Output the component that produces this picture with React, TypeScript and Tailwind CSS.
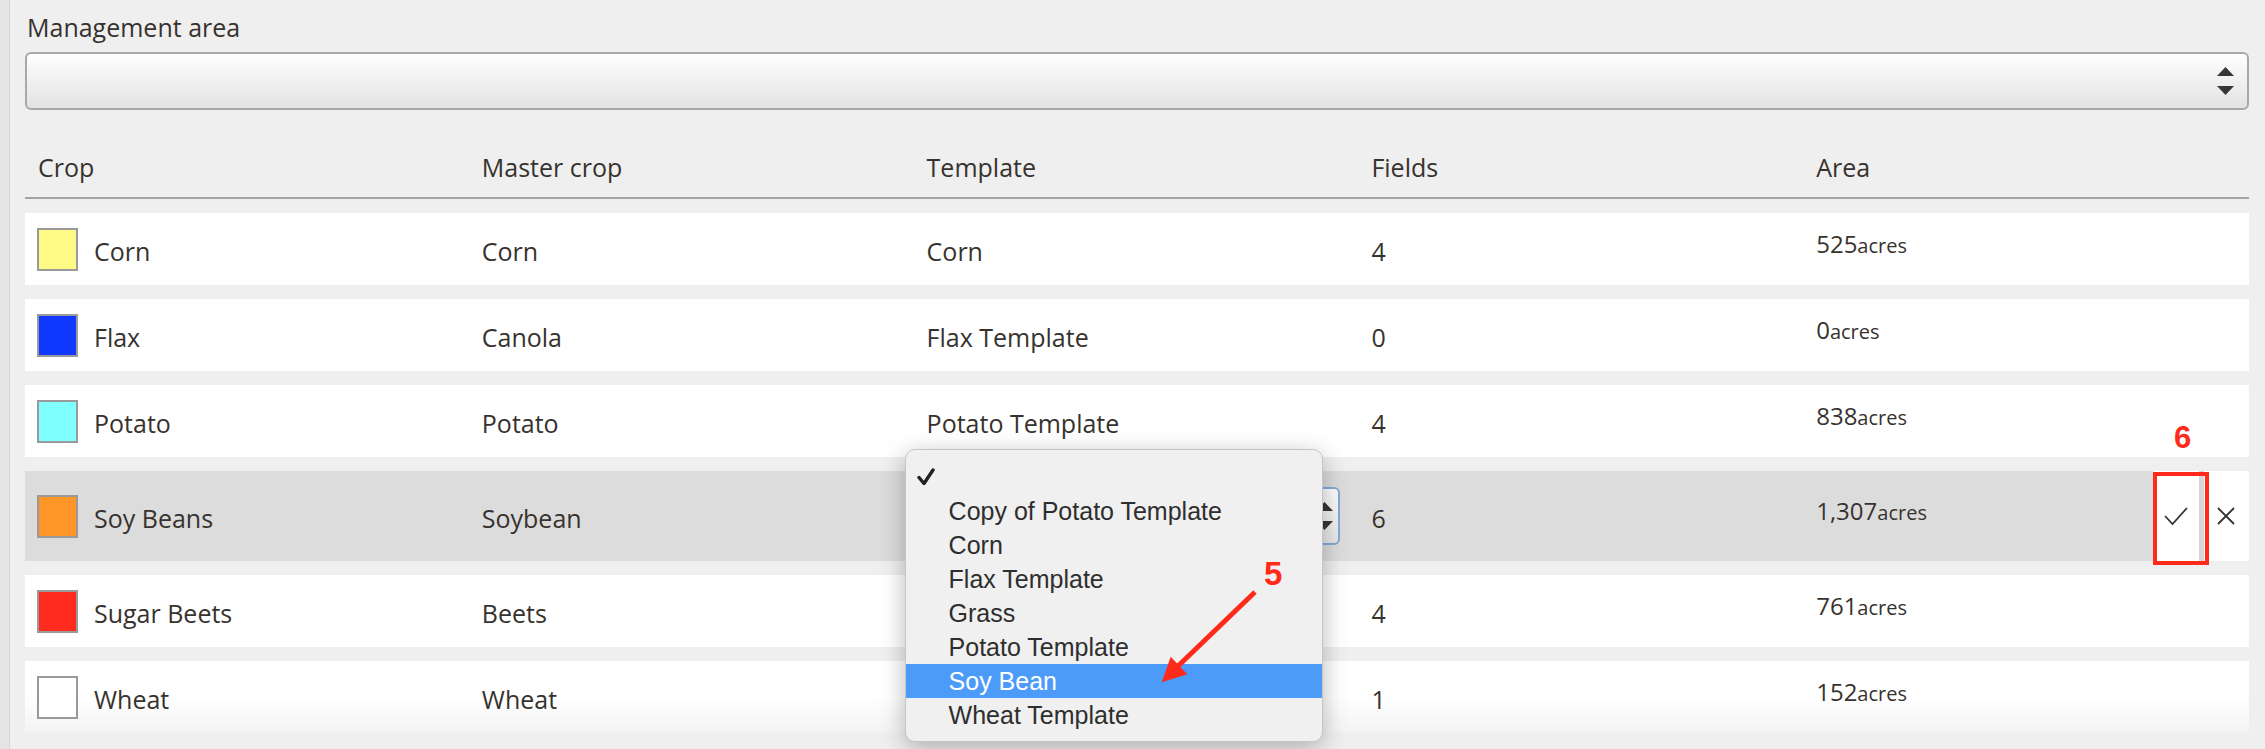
import React from "react";

type Crop = {
  name: string;
  swatch: string;
  master: string;
  template: string;
  fields: string;
  area: string;
};

const crops: Crop[] = [
  { name: "Corn", swatch: "bg-[#fff985]", master: "Corn", template: "Corn", fields: "4", area: "525" },
  { name: "Flax", swatch: "bg-[#1038ff]", master: "Canola", template: "Flax Template", fields: "0", area: "0" },
  { name: "Potato", swatch: "bg-[#80ffff]", master: "Potato", template: "Potato Template", fields: "4", area: "838" },
  { name: "Soy Beans", swatch: "bg-[#ff9526]", master: "Soybean", template: "", fields: "6", area: "1,307" },
  { name: "Sugar Beets", swatch: "bg-[#ff2b1f]", master: "Beets", template: "", fields: "4", area: "761" },
  { name: "Wheat", swatch: "bg-white", master: "Wheat", template: "", fields: "1", area: "152" },
];

const templates = [
  "Copy of Potato Template",
  "Corn",
  "Flax Template",
  "Grass",
  "Potato Template",
  "Soy Bean",
  "Wheat Template",
];

function UpDown({ className }: { className?: string }) {
  return (
    <svg width="17" height="28" viewBox="0 0 17 28" className={className}>
      <path d="M8.5 0 L17 9 L0 9 Z" fill="#3a3632" />
      <path d="M0 19 L17 19 L8.5 28 Z" fill="#3a3632" />
    </svg>
  );
}

function Area({ value }: { value: string }) {
  return (
    <div className="flex items-baseline pb-[8px]">
      <span className="text-[24px]">{value}</span>
      <span className="text-[20px]">acres</span>
    </div>
  );
}

function TemplateMenu() {
  return (
    <div className="absolute -left-[10px] -top-[22px] z-10 w-[418px] rounded-[10px] border border-[#c6c6c6] bg-[#f0f0f0] pt-[10px] pb-[9px] shadow-[0_6px_24px_rgba(0,0,0,0.28)] font-['Liberation_Sans',Arial,sans-serif] text-[25px] text-[#2e2e2e]">
      <div className="flex h-[34px] items-center pl-[11px]">
        <svg width="18" height="18" viewBox="0 0 18 18">
          <path d="M2 9.5 L7 15.5 L16 2" fill="none" stroke="#222" strokeWidth="3.4" strokeLinecap="round" strokeLinejoin="round" />
        </svg>
      </div>
      {templates.map((t) => (
        <div
          key={t}
          className={
            t === "Soy Bean"
              ? "h-[34px] leading-[34px] pl-[43px] bg-[#4c9bf8] text-white"
              : "h-[34px] leading-[34px] pl-[43px]"
          }
        >
          {t}
        </div>
      ))}
    </div>
  );
}

export default function App() {
  return (
    <div className="relative flex h-[749px] w-full overflow-hidden bg-[#efefef] font-['Open_Sans',sans-serif] text-[#37322e]">
      {/* left edge */}
      <div className="w-[10px] shrink-0 border-r border-[#d6d6d6] bg-[#e4e4e4]" />

      <div className="flex-1 pl-[15px] pr-[16px]">
        {/* Management area */}
        <div className="pt-[9px] pl-[2px] text-[25px] leading-[36px]">Management area</div>
        <div className="mt-[7px] flex h-[58px] items-center justify-end rounded-[6px] border-2 border-[#a8a8a8] bg-linear-to-b from-[#fefefe] to-[#e3e3e3] pr-[13px]">
          <UpDown />
        </div>

        {/* Header */}
        <div className="mt-[39px] grid grid-cols-5 border-b-2 border-[#a3a3a3] pb-[12px] text-[25px] leading-[36px]">
          <div className="pl-[13px]">Crop</div>
          <div className="pl-[12px]">Master crop</div>
          <div className="pl-[12px]">Template</div>
          <div className="pl-[12px]">Fields</div>
          <div className="pl-[12px]">Area</div>
        </div>

        {/* Rows */}
        <div className="mt-[14px] flex flex-col gap-[14px] text-[25px] leading-[36px]">
          {crops.map((c) => {
            const editing = c.name === "Soy Beans";
            const last = c.name === "Wheat";
            return (
              <div
                key={c.name}
                className={
                  editing
                    ? "grid h-[90px] grid-cols-5 bg-[#dcdcdc]"
                    : last
                    ? "grid h-[72px] grid-cols-5 bg-linear-to-b from-white from-50% to-[#f3f3f3]"
                    : "grid h-[72px] grid-cols-5 bg-white"
                }
              >
                <div className="flex items-center gap-[16px] pl-[12px]">
                  <div className={`h-[43px] w-[41px] border-2 border-[#9a9a9a] ${c.swatch}`} />
                  <span className="pt-[3px]">{c.name}</span>
                </div>
                <div className="flex items-center pl-[12px] pt-[3px]">{c.master}</div>
                <div className="relative flex items-center pl-[12px]">
                  {editing ? (
                    <>
                      <div className="-ml-[12px] flex h-[58px] w-[425px] items-center justify-end rounded-[6px] border-2 border-[#86a9d6] bg-linear-to-b from-[#fefefe] to-[#e6e6e6] pr-[5px]">
                        <UpDown />
                      </div>
                      <TemplateMenu />
                    </>
                  ) : (
                    <span className="pt-[3px]">{c.template}</span>
                  )}
                </div>
                <div className="flex items-center pl-[12px] pt-[3px]">{c.fields}</div>
                <div className="flex items-stretch justify-between pl-[12px]">
                  <div className="flex items-center">
                    <Area value={c.area} />
                  </div>
                  {editing && (
                    <div className="relative flex w-[96px] bg-white">
                      <div className="flex w-[51px] items-center justify-center border-r-[5px] border-[#d6d6d6]">
                        <svg width="24" height="18" viewBox="0 0 24 18">
                          <path d="M1 9 L8.5 17 L23 1" fill="none" stroke="#333" strokeWidth="1.8" />
                        </svg>
                      </div>
                      <div className="flex flex-1 items-center justify-center">
                        <svg width="18" height="18" viewBox="0 0 18 18">
                          <path d="M1 1 L17 17 M17 1 L1 17" fill="none" stroke="#333" strokeWidth="1.8" />
                        </svg>
                      </div>
                      {/* annotation 6 */}
                      <div className="absolute left-0 top-[1px] h-[93px] w-[56px] border-4 border-[#ff2a1a]" />
                      <span className="absolute left-[21px] -top-[49px] font-['Liberation_Sans',Arial,sans-serif] text-[31px] font-bold leading-[32px] text-[#ff2a1a]">
                        6
                      </span>
                    </div>
                  )}
                </div>
              </div>
            );
          })}
        </div>
      </div>

      {/* annotation 5 */}
      <svg
        className="absolute left-[1150px] top-[580px] z-20"
        width="120"
        height="115"
        viewBox="0 0 120 115"
      >
        <line x1="105" y1="12" x2="26" y2="88" stroke="#ff2a1a" strokeWidth="5" />
        <path d="M11.7 102.3 L20.7 76.7 L37.3 94.3 Z" fill="#ff2a1a" />
      </svg>
      <span className="absolute left-[1264px] top-[557px] z-20 font-['Liberation_Sans',Arial,sans-serif] text-[33px] font-bold leading-[33px] text-[#ff2a1a]">
        5
      </span>
    </div>
  );
}
